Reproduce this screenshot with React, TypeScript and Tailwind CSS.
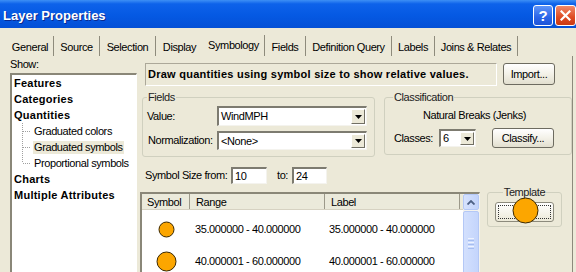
import React from "react";

function Arrow() {
  return (
    <svg width="7" height="4" viewBox="0 0 7 4">
      <path d="M0 0 H7 L3.5 4 Z" fill="#000" />
    </svg>
  );
}

function Combo({ w, h, text }: { w: string; h: string; text: string }) {
  return (
    <div
      className={`${w} ${h} flex items-stretch bg-white border-t-2 border-l-2 border-t-[#7d7b70] border-l-[#7d7b70] border-b border-r border-b-[#f4f3ee] border-r-[#f4f3ee]`}
    >
      <div className="flex-1 flex items-center pl-[2px] leading-none">{text}</div>
      <div className="w-[14px] my-[1px] mr-[1px] bg-[#ece9d8] border border-t-white border-l-white border-b-[#716f64] border-r-[#716f64] flex items-center justify-center">
        <Arrow />
      </div>
    </div>
  );
}

function Input({ w, text }: { w: string; text: string }) {
  return (
    <div
      className={`${w} h-[17px] flex items-center pl-[2px] bg-white border-t-2 border-l-2 border-t-[#7d7b70] border-l-[#7d7b70] border-b border-r border-b-[#f4f3ee] border-r-[#f4f3ee]`}
    >
      {text}
    </div>
  );
}

function Btn({ w, h, text }: { w: string; h: string; text: string }) {
  return (
    <div
      className={`${w} ${h} flex items-center justify-center rounded-[3px] border border-[#6d6b60] bg-[linear-gradient(to_bottom,#ffffff_0%,#f3f1e8_50%,#e2dfcf_100%)]`}
    >
      {text}
    </div>
  );
}

function Circle({ d }: { d: number }) {
  return (
    <svg width={d + 2} height={d + 2} viewBox={`0 0 ${d + 2} ${d + 2}`}>
      <circle cx={(d + 2) / 2} cy={(d + 2) / 2} r={d / 2} fill="#fca600" stroke="#3b2800" strokeWidth="1" />
    </svg>
  );
}

function TreeLine({ last }: { last?: boolean }) {
  return (
    <svg width="19" height="16" viewBox="0 0 19 16" className="shrink-0">
      <line x1="8.5" y1="0" x2="8.5" y2={last ? 8 : 16} stroke="#a0a0a0" strokeDasharray="1 1" />
      <line x1="9" y1="8.5" x2="17" y2="8.5" stroke="#a0a0a0" strokeDasharray="1 1" />
    </svg>
  );
}

const tabs: { label: string; w: string; sel?: boolean; noBorder?: boolean }[] = [
  { label: "General", w: "w-[47px]" },
  { label: "Source", w: "w-[46px]" },
  { label: "Selection", w: "w-[56px]" },
  { label: "Display", w: "w-[47px]", noBorder: true },
  { label: "Symbology", w: "w-[62px]", sel: true },
  { label: "Fields", w: "w-[41px]" },
  { label: "Definition Query", w: "w-[86px]" },
  { label: "Labels", w: "w-[43px]" },
  { label: "Joins & Relates", w: "w-[83px]" },
];

export default function App() {
  return (
    <div className="w-[576px] h-[272px] overflow-hidden bg-[#ece9d8] text-black text-[11px] tracking-[-0.4px] leading-[13px] font-['Liberation_Sans',Arial,sans-serif]">
      {/* Title bar */}
      <div className="h-[28px] flex items-start bg-[linear-gradient(to_bottom,#3d8ff5_0%,#0d62ea_14%,#0559e3_55%,#0450d6_100%)]">
        <div className="mt-[8px] ml-[3px] text-[13px] leading-[15px] font-bold text-white tracking-normal [text-shadow:1px_1px_0_#0b2a8f]">
          Layer Properties
        </div>
        <div className="ml-auto mt-[5px] flex gap-[2px]">
          <div className="w-[20px] h-[21px] rounded-[3px] border border-white bg-[linear-gradient(to_bottom,#5f95f8,#2a64e8_60%,#1f55d8)] flex items-center justify-center text-white font-bold text-[15px] tracking-normal">
            ?
          </div>
          <div className="w-[21px] h-[21px] rounded-[3px] border border-white bg-[linear-gradient(to_bottom,#f08a6a,#de4a22_60%,#c93a14)] flex items-center justify-center">
            <svg width="11" height="11" viewBox="0 0 11 11">
              <path d="M1.5 1.5 L9.5 9.5 M9.5 1.5 L1.5 9.5" stroke="#fff" strokeWidth="2.2" strokeLinecap="square" />
            </svg>
          </div>
        </div>
      </div>

      {/* Tabs */}
      <div className="flex mt-[7px] ml-[7px] h-[21px] items-end">
        {tabs.map((t) => (
          <div
            key={t.label}
            className={`${t.w} flex items-center justify-center ${
              t.sel ? "h-[21px] pb-[1px]" : "h-[20px] pt-[2px]"
            } ${t.noBorder ? "" : "border-r border-r-[#8e8b7c]"}`}
          >
            {t.label}
          </div>
        ))}
      </div>

      {/* Panel */}
      <div className="ml-[5px] w-[568px] h-[216px] border-r border-r-[#8c8a7c] flex">
        {/* Left column */}
        <div className="ml-[5px] w-[127px] flex flex-col">
          <div className="mt-[2px]">Show:</div>
          <div className="mt-[2px] flex-1 bg-white border-t-2 border-l-2 border-t-[#8a8778] border-l-[#8a8778] border-r border-r-white">
            <div className="h-[16px] flex items-center pl-[2px] font-bold tracking-[0.25px]">Features</div>
            <div className="h-[16px] flex items-center pl-[2px] font-bold tracking-[0.25px]">Categories</div>
            <div className="h-[16px] flex items-center pl-[2px] font-bold tracking-[0.25px]">Quantities</div>
            <div className="h-[16px] flex items-center pl-[2px]">
              <TreeLine />
              <span className="px-[1px]">Graduated colors</span>
            </div>
            <div className="h-[16px] flex items-center pl-[2px]">
              <TreeLine />
              <span className="px-[1px] bg-[#ece9d8] leading-[13px]">Graduated symbols</span>
            </div>
            <div className="h-[16px] flex items-center pl-[2px]">
              <TreeLine last />
              <span className="px-[1px]">Proportional symbols</span>
            </div>
            <div className="h-[16px] flex items-center pl-[2px] font-bold tracking-[0.25px]">Charts</div>
            <div className="h-[16px] flex items-center pl-[2px] font-bold tracking-[0.25px]">Multiple Attributes</div>
          </div>
        </div>

        {/* Right column */}
        <div className="ml-[3px] flex-1 flex flex-col">
          {/* Row 1 */}
          <div className="flex items-start mt-[7px]">
            <div className="ml-[5px] w-[352px] h-[23px] flex items-center pl-[2px] font-bold tracking-[0.25px] border border-t-[#aca899] border-l-[#aca899] border-b-white border-r-white">
              Draw quantities using symbol size to show relative values.
            </div>
            <div className="ml-[6px]">
              <Btn w="w-[52px]" h="h-[22px]" text="Import..." />
            </div>
          </div>

          {/* Row 2 */}
          <div className="flex items-start mt-[5px]">
            <fieldset className="ml-[2px] w-[233px] h-[66px] border border-[#d0d0bf] rounded-[3px]">
              <legend className="ml-[4px] px-[1px] text-[#222]">Fields</legend>
              <div className="flex items-center mt-[2px] h-[20px]">
                <div className="ml-[4px] w-[70px]">Value:</div>
                <Combo w="w-[150px]" h="h-[20px]" text="WindMPH" />
              </div>
              <div className="flex items-center mt-[5px] h-[19px]">
                <div className="ml-[5px] w-[69px]">Normalization:</div>
                <Combo w="w-[150px]" h="h-[19px]" text="<None>" />
              </div>
            </fieldset>
            <fieldset className="ml-[9px] w-[188px] h-[64px] border border-[#d0d0bf] rounded-[3px]">
              <legend className="ml-[8px] px-[1px] text-[#222]">Classification</legend>
              <div className="mt-[5px] h-[13px] flex justify-center pr-[7px]">Natural Breaks (Jenks)</div>
              <div className="mt-[6px] h-[20px] flex items-center">
                <div className="ml-[9px] w-[45px]">Classes:</div>
                <Combo w="w-[37px]" h="h-[18px]" text="6" />
                <div className="ml-[16px]">
                  <Btn w="w-[62px]" h="h-[20px]" text="Classify..." />
                </div>
              </div>
            </fieldset>
          </div>

          {/* Row 3 */}
          <div className="flex items-center mt-[10px] h-[17px]">
            <div className="ml-[5px] w-[86px]">Symbol Size from:</div>
            <Input w="w-[36px]" text="10" />
            <div className="ml-[10px] w-[15px]">to:</div>
            <Input w="w-[35px]" text="24" />
          </div>

          {/* Row 4 */}
          <div className="flex items-start mt-[2px]">
            <div className="mt-[6px] w-[340px] h-[90px] flex bg-white border-t-2 border-l-2 border-t-[#8a8778] border-l-[#8a8778] border-r border-r-[#f4f3ee]">
              <div className="flex-1 flex flex-col">
                <div className="h-[16px] flex bg-[#ebeadb] border-b border-b-[#d6d2c2]">
                  <div className="w-[48px] pl-[5px] flex items-center pt-[1px] border-r border-r-[#9c998a]">Symbol</div>
                  <div className="w-[135px] pl-[6px] flex items-center pt-[1px] border-r border-r-[#9c998a]">Range</div>
                  <div className="w-[135px] pl-[6px] flex items-center pt-[1px] border-r border-r-[#9c998a]">Label</div>
                  <div className="flex-1" />
                </div>
                <div className="pt-[3px]">
                  <div className="h-[32px] flex items-center">
                    <div className="w-[48px] flex justify-center">
                      <Circle d={15} />
                    </div>
                    <div className="w-[135px] pl-[5px]">35.000000 - 40.000000</div>
                    <div className="flex-1 pl-[4px] whitespace-nowrap overflow-hidden">35.000000 - 40.000000</div>
                  </div>
                  <div className="h-[32px] flex items-center">
                    <div className="w-[48px] flex justify-center">
                      <Circle d={19} />
                    </div>
                    <div className="w-[135px] pl-[5px]">40.000001 - 60.000000</div>
                    <div className="flex-1 pl-[4px] whitespace-nowrap overflow-hidden">40.000001 - 60.000000</div>
                  </div>
                </div>
              </div>
              {/* Scrollbar */}
              <div className="w-[16px] flex flex-col bg-[#f4f3ee]">
                <div className="h-[16px] rounded-[2px] border border-[#b4c8f6] bg-[linear-gradient(to_right,#d6e2fd,#c2d3fb)] flex items-center justify-center">
                  <svg width="8" height="5" viewBox="0 0 8 5">
                    <path d="M0.5 4.5 L4 1 L7.5 4.5" stroke="#4d6185" strokeWidth="1.8" fill="none" />
                  </svg>
                </div>
                <div className="mt-[1px] flex-1 rounded-[2px] border border-[#b4c8f6] bg-[linear-gradient(to_right,#d3e0fd,#c4d5fc)] flex flex-col items-center pt-[26px] gap-[1px]">
                  <div className="w-[6px] h-[1px] bg-[#eef3ff]" />
                  <div className="w-[6px] h-[1px] bg-[#a6bdf0]" />
                  <div className="w-[6px] h-[1px] bg-[#eef3ff]" />
                  <div className="w-[6px] h-[1px] bg-[#a6bdf0]" />
                  <div className="w-[6px] h-[1px] bg-[#eef3ff]" />
                  <div className="w-[6px] h-[1px] bg-[#a6bdf0]" />
                </div>
              </div>
            </div>

            <fieldset className="ml-[7px] w-[75px] h-[41px] border border-[#d0d0bf] rounded-[3px]">
              <legend className="mx-auto px-[1px] text-[#222]">Template</legend>
              <div className="ml-[7px] mt-[3px] w-[59px] h-[20px] relative rounded-[3px] border border-[#8c8a7c] bg-[linear-gradient(to_bottom,#ffffff,#ece9d8)]">
                <div className="absolute inset-[2px] border border-dotted border-[#333]" />
                <div className="absolute left-[16px] top-[-6px]">
                  <Circle d={25} />
                </div>
              </div>
            </fieldset>
          </div>
        </div>
      </div>
    </div>
  );
}
